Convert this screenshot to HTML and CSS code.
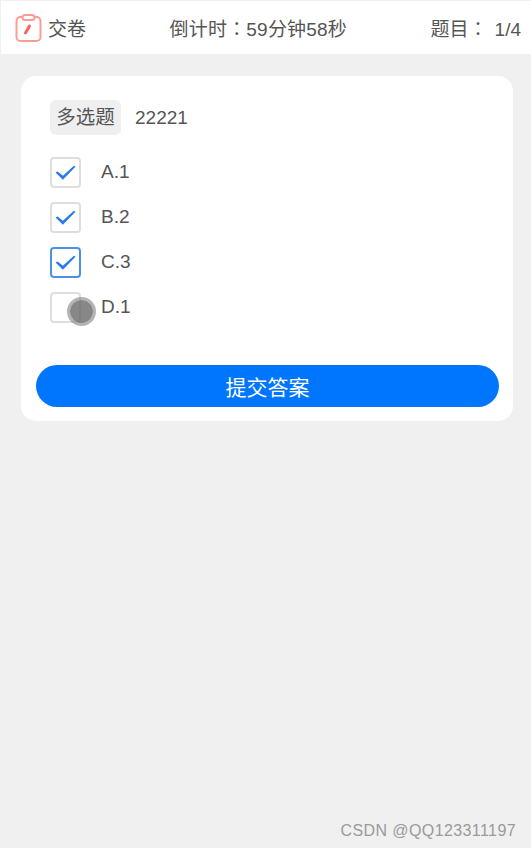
FILE: index.html
```html
<!DOCTYPE html>
<html lang="zh-CN">
<head>
  <meta charset="UTF-8">
  <meta name="viewport" content="width=device-width, initial-scale=1.0">
  <title>答题</title>
  <link rel="stylesheet" href="styles.css">
</head>
<body>
  <div class="page">
    <header class="topbar">
      <div class="hand-in">
        <svg class="clipboard" width="28" height="30" viewBox="0 0 28 30" fill="none">
          <rect x="2.5" y="4" width="24" height="24" rx="4" stroke="#fd9c95" stroke-width="2"/>
          <rect x="8.5" y="2" width="12" height="5" rx="2.5" fill="#fff" stroke="#fd9c95" stroke-width="2"/>
          <path d="M15.5 13 L11.5 20" stroke="#f8645c" stroke-width="3" stroke-linecap="round"/>
        </svg>
        <span>交卷</span>
      </div>
      <div class="countdown">倒计时<span class="colon" lang="zh-TW">：</span>59分钟58秒</div>
      <div class="progress">题目<span class="colon" lang="zh-TW">：</span><span class="progress-num">1/4</span></div>
    </header>

    <main class="card">
      <div class="question">
        <span class="tag">多选题</span>
        <span class="title">22221</span>
      </div>
      <ul class="options">
        <li class="option">
          <span class="box"><svg class="tick" width="21" height="17" viewBox="0 0 20 16"><path d="M0.5 8 L2.5 7 L7.5 11 L18 1.5 L19.5 2.5 L7.5 15 Z" fill="#2a7ae8"/></svg></span>
          <span>A.1</span>
        </li>
        <li class="option">
          <span class="box"><svg class="tick" width="21" height="17" viewBox="0 0 20 16"><path d="M0.5 8 L2.5 7 L7.5 11 L18 1.5 L19.5 2.5 L7.5 15 Z" fill="#2a7ae8"/></svg></span>
          <span>B.2</span>
        </li>
        <li class="option">
          <span class="box box-active"><svg class="tick" width="21" height="17" viewBox="0 0 20 16"><path d="M0.5 8 L2.5 7 L7.5 11 L18 1.5 L19.5 2.5 L7.5 15 Z" fill="#2a7ae8"/></svg></span>
          <span>C.3</span>
        </li>
        <li class="option">
          <span class="box"><span class="cursor-dot"></span></span>
          <span>D.1</span>
        </li>
      </ul>
      <button class="submit" type="button">提交答案</button>
    </main>
  </div>
  <div class="watermark">CSDN @QQ123311197</div>
</body>
</html>
```

FILE: styles.css
```css
* {
  box-sizing: border-box;
}

html, body {
  height: 100%;
}

body {
  margin: 0;
  background-color: #f0f0f0;
  font-family: "Liberation Sans", "Noto Sans CJK SC", sans-serif;
  color: #555;
  overflow: hidden;
}

.page {
  height: 848px;
  margin-left: 1px;
  padding-top: 1px;
  position: relative;
}

.topbar {
  height: 53px;
  background-color: #fff;
  display: flex;
  align-items: center;
  justify-content: space-between;
  padding: 0 10px 0 13px;
  font-size: 19px;
}

.hand-in {
  display: flex;
  align-items: center;
  gap: 6px;
}

.clipboard {
  display: block;
}

.countdown {
  letter-spacing: 0.2px;
}

.colon {
  font-family: "Noto Sans CJK TC", sans-serif;
}

.progress-num {
  margin-left: 7px;
}

.card {
  margin: 22px 18px 0 20px;
  height: 345px;
  background-color: #fff;
  border-radius: 15px;
  padding: 24px 14px 14px 15px;
}

.question {
  display: flex;
  align-items: center;
  margin-left: 14px;
  font-size: 19px;
}

.tag {
  width: 71px;
  height: 35px;
  line-height: 35px;
  text-align: center;
  background-color: #efefef;
  border-radius: 6px;
  font-size: 19.5px;
}

.title {
  margin-left: 14px;
}

.options {
  list-style: none;
  margin: 22px 0 0 14px;
  padding: 0;
}

.option {
  display: flex;
  align-items: center;
  height: 31px;
  margin-bottom: 14px;
  font-size: 19px;
  gap: 20px;
}

.option > span:last-child {
  margin-top: -2px;
}

.box {
  width: 31px;
  height: 31px;
  border: 2px solid #dedede;
  border-radius: 4px;
  display: flex;
  align-items: center;
  justify-content: center;
  position: relative;
}

.tick {
  margin-top: -1px;
}

.box-active {
  border-color: #4a90ea;
}

.cursor-dot {
  position: absolute;
  left: 15px;
  top: 3px;
  width: 29px;
  height: 29px;
  border-radius: 50%;
  background-color: rgba(95, 95, 95, 0.75);
  border: 3px solid rgba(140, 140, 140, 0.65);
  background-clip: padding-box;
}

.submit {
  display: block;
  width: 100%;
  height: 42px;
  margin-top: 42px;
  border: none;
  border-radius: 21px;
  background-color: #0076ff;
  color: #fff;
  font-family: inherit;
  font-size: 21px;
}

.watermark {
  position: absolute;
  right: 15px;
  bottom: 8px;
  font-size: 16px;
  color: #9a9a9a;
  letter-spacing: 0.4px;
}
```
